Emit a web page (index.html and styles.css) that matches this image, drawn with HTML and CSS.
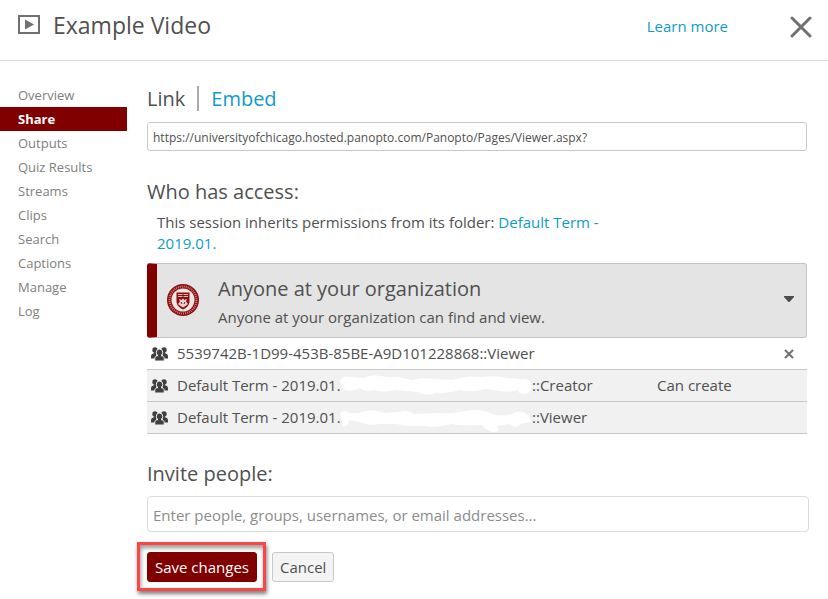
FILE: index.html
```html
<!DOCTYPE html>
<html lang="en">
  <head>
    <meta charset="UTF-8" />
    <meta name="viewport" content="width=device-width, initial-scale=1" />
    <title>Example Video</title>
    <link rel="stylesheet" href="styles.css">
  </head>
  <body>
    <!-- Shared icon shapes -->
    <svg class="icon-defs" aria-hidden="true">
      <symbol id="icon-group" viewBox="0 0 17 14">
        <circle cx="4" cy="3" r="2.7" />
        <circle cx="13" cy="3" r="2.7" />
        <path d="M0 11.500V9.500C0 7.500 1 6.800 3 6.300L3 4.500H5.500V7.500L4.500 11.500ZM17 11.500V9.500C17 7.500 16 6.800 14 6.300L14 4.500H11.500V7.500L12.500 11.500Z" />
        <path class="icon-front" d="M3.800 14V11.500C3.800 9.700 5 9 7 8.500C5.600 7.500 5.300 6.500 5.300 5.300A3.200 3.300 0 0 1 11.700 5.300C11.700 6.500 11.400 7.500 10 8.500C12 9 13.200 9.700 13.200 11.500V14Z" />
      </symbol>
    </svg>

    <!-- Header -->
    <header class="header">
      <svg class="header-icon" viewBox="0 0 22 19" aria-hidden="true">
        <rect x="1" y="1" width="20" height="17" fill="none" stroke="#707070" stroke-width="2" />
        <path d="M7 4.500L16 9.500L7 14.500Z" fill="#707070" />
      </svg>
      <h1 class="title">Example Video</h1>
      <a class="learn-more" href="#">Learn more</a>
      <button type="button" class="close-btn" aria-label="Close">
        <svg viewBox="0 0 22 22"><path d="M2 2L20 20M20 2L2 20" /></svg>
      </button>
    </header>

    <div class="layout">
      <!-- Side menu -->
      <nav class="menu">
        <a href="#">Overview</a>
        <a href="#" class="active">Share</a>
        <a href="#">Outputs</a>
        <a href="#">Quiz Results</a>
        <a href="#">Streams</a>
        <a href="#">Clips</a>
        <a href="#">Search</a>
        <a href="#">Captions</a>
        <a href="#">Manage</a>
        <a href="#">Log</a>
      </nav>

      <main class="content">
        <div class="tabs">
          <label class="tab" for="share-link">Link</label>
          <a class="tab tab-link" href="#">Embed</a>
        </div>
        <input type="text" id="share-link" class="link-input" readonly value="https://universityofchicago.hosted.panopto.com/Panopto/Pages/Viewer.aspx?" />

        <h2 class="access-title">Who has access:</h2>
        <p class="inherit">This session inherits permissions from its folder: <a href="#">Default Term - 2019.01.</a></p>

        <button type="button" class="access-level" aria-haspopup="listbox">
          <svg class="seal" viewBox="0 0 32 32" aria-hidden="true">
            <circle cx="16" cy="16" r="16" fill="#8b1012" />
            <circle cx="16" cy="16" r="13.500" fill="none" stroke="#c98586" stroke-width="2" stroke-dasharray="1 1" />
            <circle cx="16" cy="16" r="11.500" fill="#f1e4e4" />
            <path d="M9.500 8.500H22.500V17C22.500 21 20 23.500 16 25.500C12 23.500 9.500 21 9.500 17Z" fill="#8b1012" />
            <path d="M11 10H21V13H11Z" fill="#dcb4b5" />
            <path d="M16 10V13M11 11.500H21" stroke="#8b1012" />
            <path d="M11 20L13 17.500L12 15L14.500 16L16 14.500L17.500 16L20 15L19 17.500L21 20L18.500 22L16 23.500L13.500 22Z" fill="#e9d2d2" />
            <path d="M14 18L15 20M18 18L17 20" stroke="#8b1012" />
          </svg>
          <span class="access-text">
            <span class="access-name">Anyone at your organization</span>
            <span class="access-info">Anyone at your organization can find and view.</span>
          </span>
          <svg class="arrow" viewBox="0 0 10 6" aria-hidden="true"><path d="M0 0H10V1L5.500 6H4.500L0 1Z" /></svg>
        </button>

        <!-- Groups with access -->
        <table class="groups">
          <tbody>
            <tr class="own">
              <td class="cell-icon"><svg class="group-icon" aria-hidden="true"><use href="#icon-group" /></svg></td>
              <td class="cell-name">5539742B-1D99-453B-85BE-A9D101228868::Viewer</td>
              <td class="cell-role"></td>
              <td class="cell-remove">
                <button type="button" class="remove-btn" aria-label="Remove">
                  <svg viewBox="0 0 10 10"><path d="M1 1L9 9M9 1L1 9" /></svg>
                </button>
              </td>
            </tr>
            <tr>
              <td class="cell-icon"><svg class="group-icon" aria-hidden="true"><use href="#icon-group" /></svg></td>
              <td class="cell-name">
                <span class="masked"><span class="term">Default Term - 2019.01.</span><svg class="mask" viewBox="0 0 192 24" aria-hidden="true">
                  <path d="M0 7Q3 1 10 3L24 4Q32 0 40 2Q50 4 58 3L72 6Q82 3 94 5L112 6Q128 1 142 3Q156 1 168 4L180 5Q192 4 191 12Q191 20 185 20Q178 20 178 16Q170 19 162 17L145 15Q132 19 120 16Q108 20 96 19Q84 23 78 18L55 16Q44 19 34 16Q24 18 20 14Q10 19 3 15Z" />
                </svg><span>::Creator</span></span>
              </td>
              <td class="cell-role">Can create</td>
              <td class="cell-remove"></td>
            </tr>
            <tr>
              <td class="cell-icon"><svg class="group-icon" aria-hidden="true"><use href="#icon-group" /></svg></td>
              <td class="cell-name">
                <span class="masked"><span class="term">Default Term - 2019.01.</span><svg class="mask" viewBox="0 0 192 24" aria-hidden="true">
                  <path d="M0 7Q5 3 9 7Q18 8 26 5Q36 3 44 7L60 6Q68 3 74 8L96 7Q112 8 124 5Q142 2 152 8Q162 11 172 8Q180 3 187 8Q192 11 190 16L181 18Q175 24 170 18L157 20Q161 27 152 26Q144 23 142 19Q120 20 112 18Q98 22 84 20Q70 21 56 18L40 18Q28 20 20 16L9 14Q8 22 3 20Z" />
                </svg><span>::Viewer</span></span>
              </td>
              <td class="cell-role"></td>
              <td class="cell-remove"></td>
            </tr>
          </tbody>
        </table>

        <h2 class="invite-title"><label for="invite">Invite people:</label></h2>
        <input type="text" id="invite" class="invite-input" placeholder="Enter people, groups, usernames, or email addresses..." />

        <div class="actions">
          <div class="highlight">
            <button type="button" class="btn btn-save">Save changes</button>
          </div>
          <button type="button" class="btn btn-cancel">Cancel</button>
        </div>
      </main>
    </div>
  </body>
</html>
```

FILE: styles.css
```css
* {
  box-sizing: border-box;
}

body {
  margin: 0;
  background-color: #fff;
  color: #505050;
  font-family: "Open Sans", "Noto Sans", sans-serif;
  font-size: 15px;
  line-height: 21px;
}

a {
  color: #0f9bcb;
  text-decoration: none;
}

button,
input {
  font-family: inherit;
  color: inherit;
}

svg {
  display: block;
}

.icon-defs {
  position: absolute;
  width: 0;
  height: 0;
}

/* Header */
.header {
  display: flex;
  align-items: center;
  height: 61px;
  padding: 0 16px 7px 18px;
  border-bottom: 1px solid #dcdcdc;
}

.header-icon {
  width: 22px;
  height: 19px;
  margin-right: 13px;
  margin-bottom: 4px;
}

.title {
  flex: 1;
  margin: 0;
  padding-bottom: 4px;
  font-size: 23px;
  font-weight: 400;
  line-height: 32px;
}

.learn-more {
  margin-right: 62px;
}

.close-btn {
  padding: 0;
  border: 0;
  background: none;
}

.close-btn svg {
  width: 22px;
  height: 22px;
  fill: none;
  stroke: #707070;
  stroke-width: 3;
  stroke-linecap: round;
}

.layout {
  display: flex;
  align-items: flex-start;
  gap: 20px;
  padding-top: 22px;
}

/* Side menu */
.menu {
  flex: 0 0 127px;
}

.menu a {
  display: block;
  padding-left: 18px;
  color: #808080;
  font-size: 13px;
  line-height: 24px;
}

.menu .active {
  background-color: #800000;
  color: #fff;
  font-weight: 700;
}

/* Main column */
.content {
  flex: 1;
  padding-right: 21px;
}

.tabs {
  display: flex;
  align-items: center;
  height: 30px;
  margin-bottom: 9px;
}

.tab {
  font-size: 20px;
  line-height: 25px;
}

.tab-link {
  margin-left: 12px;
  padding-left: 12px;
  border-left: 2px solid #aaa;
}

.link-input {
  display: block;
  width: 100%;
  height: 29px;
  padding: 2px 5px 0;
  border: 1px solid #c8c8c8;
  border-radius: 3px;
  font-size: 12px;
}

.access-title,
.invite-title {
  margin: 0;
  font-size: 20px;
  font-weight: 400;
  line-height: 28px;
}

.access-title {
  margin-top: 27px;
}

.inherit {
  width: 460px;
  margin: 6px 0 9px;
  padding-left: 10px;
}

/* Access level picker */
.access-level {
  display: flex;
  align-items: center;
  width: 100%;
  height: 75px;
  padding: 0 12px 2px 10px;
  border: 1px solid #c4c4c4;
  border-left: 10px solid #800000;
  border-radius: 3px;
  background-color: #e4e4e4;
  text-align: left;
}

.seal {
  width: 32px;
  height: 32px;
  margin-right: 19px;
}

.access-text {
  flex: 1;
  padding-top: 2px;
}

.access-name,
.access-info {
  display: block;
}

.access-name {
  font-size: 20px;
  line-height: 32px;
}

.access-info {
  font-size: 15px;
  line-height: 24px;
}

.arrow {
  width: 10px;
  height: 6px;
  margin-bottom: 2px;
  fill: #4c4c4c;
}

/* Group list */
.groups {
  width: 100%;
  border-spacing: 0;
  table-layout: fixed;
}

.groups tr {
  height: 32px;
  background-color: #f1f1f1;
}

.groups .own {
  background-color: #fff;
}

.groups td {
  padding: 0;
  border-bottom: 1px solid #c8c8c8;
}

.groups .cell-icon {
  width: 30px;
  padding-left: 4px;
}

.groups .cell-role {
  width: 127px;
}

.groups .cell-remove {
  width: 23px;
}

.cell-name {
  white-space: nowrap;
}

.group-icon {
  width: 17px;
  height: 14px;
  fill: #404040;
}

.icon-front {
  stroke: #f1f1f1;
  stroke-width: 1;
}

.masked {
  display: flex;
  align-items: center;
}

.term {
  width: 163px;
}

.mask {
  width: 192px;
  height: 24px;
  overflow: visible;
  fill: #fff;
}

.remove-btn {
  display: block;
  padding: 0;
  border: 0;
  background: none;
}

.remove-btn svg {
  width: 10px;
  height: 10px;
  fill: none;
  stroke: #707070;
  stroke-width: 2;
}

/* Invite */
.invite-title {
  margin-top: 26px;
  margin-bottom: 8px;
}

.invite-input {
  display: block;
  width: calc(100% + 2px);
  height: 36px;
  padding: 2px 5px 0;
  border: 1px solid #dcdcdc;
  border-radius: 4px;
  font-size: 15px;
}

.invite-input::placeholder {
  color: #8c8c8c;
  opacity: 1;
}

/* Buttons */
.actions {
  display: flex;
  align-items: center;
  gap: 6px;
  margin: 10px 0 8px -10px;
}

.highlight {
  padding: 7px 6px 6px 7px;
  border: 3px solid #fb4547;
  box-shadow: 1px 3px 4px rgba(0, 0, 0, 0.5), inset 1px 3px 4px rgba(0, 0, 0, 0.4);
}

.btn {
  display: block;
  height: 30px;
  padding: 0 7px;
  border: 1px solid #c8c8c8;
  border-radius: 3px;
  font-size: 15px;
  line-height: 28px;
}

.btn-save {
  border-color: #800000;
  background-color: #800000;
  color: #fff;
}

.btn-cancel {
  background-color: #f4f4f4;
}
```
